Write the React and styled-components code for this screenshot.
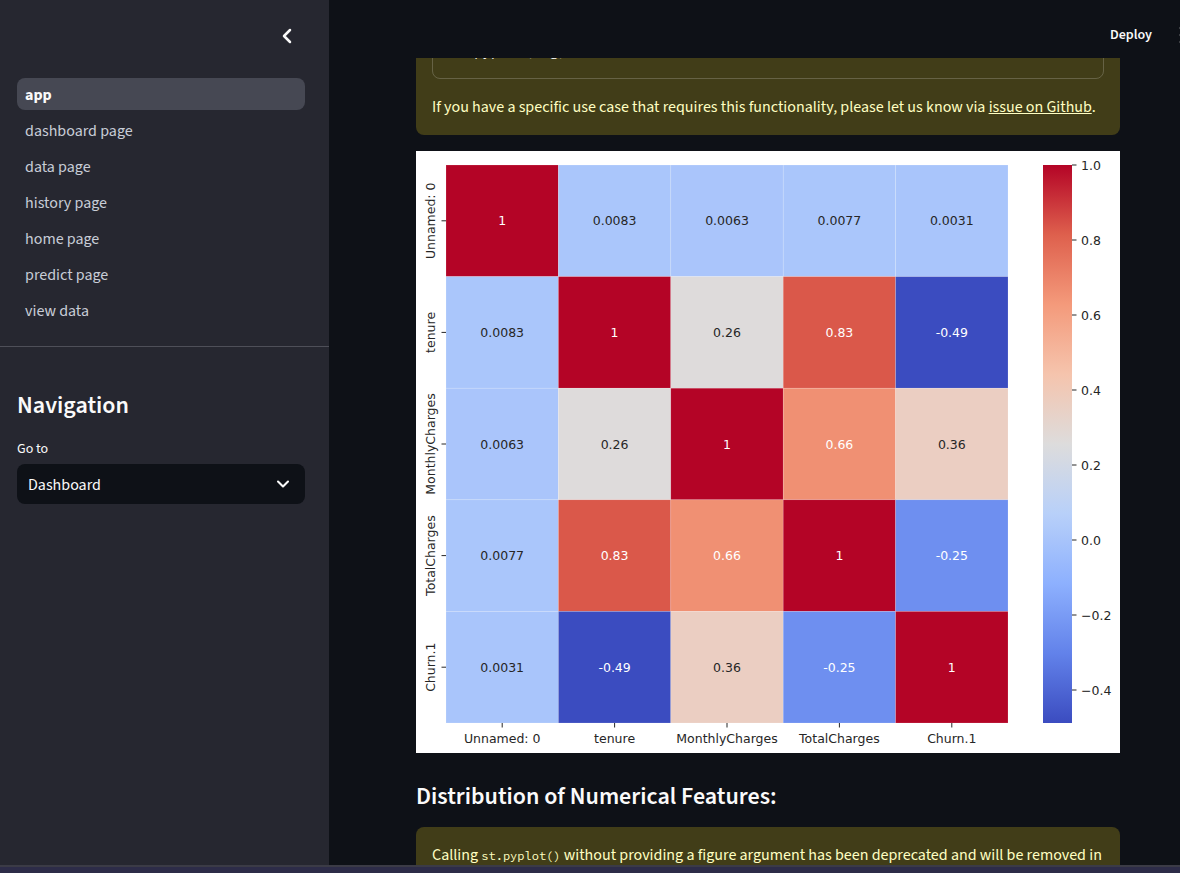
import React from 'react';
import styled, { createGlobalStyle } from 'styled-components';
import { ChevronLeft, ChevronDown, EllipsisVertical } from 'lucide-react';

const SANS = '"Source Sans Pro", "Source Sans 3", "Liberation Sans Narrow", Roboto, sans-serif';
const MONO = '"Source Code Pro", "Liberation Mono", "DejaVu Sans Mono", monospace';

const GlobalStyle = createGlobalStyle`
    html, body {
        margin: 0;
        padding: 0;
        overflow: hidden;
        background: #0e1117;
    }
    body {
        font-family: ${SANS};
        color: #fafafa;
    }
    * {
        box-sizing: border-box;
    }
`;

const Shell = styled.div`
    width: 1180px;
    height: 873px;
    display: flex;
    flex-direction: column;
    overflow: hidden;
`;

const Body = styled.div`
    flex: 1;
    min-height: 0;
    display: flex;
`;

const Taskbar = styled.div`
    height: 8px;
    flex-shrink: 0;
    border-top: 2px solid #3b3b46;
    background: #2d2c48;
`;

/* ---------- sidebar ---------- */

const Sidebar = styled.aside`
    width: 329px;
    flex-shrink: 0;
    background: #262730;
    display: flex;
    flex-direction: column;
`;

const SidebarHeader = styled.div`
    height: 72px;
    display: flex;
    justify-content: flex-end;
    align-items: flex-start;
    padding: 24px 30px 0 0;
`;

const IconButton = styled.button`
    width: 24px;
    height: 24px;
    padding: 0;
    border: none;
    background: transparent;
    color: #fafafa;
    display: flex;
    align-items: center;
    justify-content: center;
    cursor: pointer;
`;

const NavList = styled.nav`
    display: flex;
    flex-direction: column;
    gap: 4px;
    padding: 6px 24px 20px 17px;
    border-bottom: 1px solid #4e4f58;
`;

const NavItem = styled.a`
    height: 32px;
    display: flex;
    align-items: center;
    padding: 2px 8px 0;
    border-radius: 8px;
    font-size: 16px;
    text-decoration: none;
    color: ${p => (p.$active ? '#fafafa' : '#c8cdd7')};
    font-weight: ${p => (p.$active ? 700 : 400)};
    background: ${p => (p.$active ? '#464853' : 'transparent')};
`;

const SidebarContent = styled.div`
    padding: 44px 24px 0 17px;
    display: flex;
    flex-direction: column;
`;

const SidebarTitle = styled.h2`
    margin: 0;
    font-size: 24px;
    line-height: 29px;
    font-weight: 600;
    color: #fafafa;
`;

const FieldLabel = styled.label`
    margin-top: 21px;
    font-size: 14px;
    line-height: 16px;
    color: #fafafa;
`;

const Select = styled.div`
    margin-top: 7px;
    height: 40px;
    border-radius: 8px;
    background: #0e1117;
    display: flex;
    align-items: center;
    justify-content: space-between;
    padding: 2px 12px 0 11px;
    font-size: 16px;
    color: #fafafa;

    svg {
        margin-top: -2px;
    }
`;

/* ---------- main ---------- */

const Main = styled.main`
    flex: 1;
    min-width: 0;
    display: flex;
    flex-direction: column;
    background: #0e1117;
`;

const Header = styled.header`
    height: 58px;
    flex-shrink: 0;
    display: flex;
    justify-content: flex-end;
    align-items: flex-start;
    padding-top: 23px;
`;

const DeployButton = styled.button`
    height: 24px;
    border: none;
    background: transparent;
    padding: 0;
    margin-right: 18px;
    font-family: ${SANS};
    font-size: 14px;
    font-weight: 600;
    color: #fafafa;
    cursor: pointer;
`;

const MenuButton = styled(IconButton)`
    margin-right: -14px;
`;

const ScrollArea = styled.div`
    flex: 1;
    min-height: 0;
    overflow: hidden;
`;

const Column = styled.div`
    width: 704px;
    margin-left: 87px;
    display: flex;
    flex-direction: column;
`;

const ScrolledOff = styled.div`
    height: ${p => p.$height}px;
    flex-shrink: 0;
    display: flex;
    flex-direction: column;
    justify-content: flex-end;
    overflow: hidden;
`;

const Alert = styled.div`
    flex-shrink: 0;
    margin-top: ${p => p.$gap || 0}px;
    background: #413d18;
    border-radius: 8px;
    padding: 16px;
    color: #ffffc2;
    font-size: 16px;
    line-height: 24px;
`;

const AlertText = styled.p`
    margin: 0 0 16px;
    &:last-child {
        margin-bottom: 0;
    }
    a {
        color: inherit;
        text-decoration: underline;
    }
`;

const InlineCode = styled.code`
    font-family: ${MONO};
    font-size: 12px;
`;

const CodeBlock = styled.pre`
    margin: 0 0 16px;
    padding: 16px;
    border: 1px solid rgba(250, 250, 250, 0.2);
    border-radius: 8px;
    font-family: ${MONO};
    font-size: 14px;
    line-height: 21px;
    color: #fafafa;
    white-space: pre;
`;

const ChartFrame = styled.div`
    margin-top: 16px;
    width: 704px;
    height: 602px;
    background: #ffffff;
    flex-shrink: 0;

    svg {
        display: block;
    }
`;

const SectionTitle = styled.h3`
    margin: 29px 0 0;
    font-size: 24px;
    line-height: 29px;
    font-weight: 600;
    color: #fafafa;
`;

/* ---------- heatmap ---------- */

const LABELS = ['Unnamed: 0', 'tenure', 'MonthlyCharges', 'TotalCharges', 'Churn.1'];
const CORR = [
    [1, 0.0083, 0.0063, 0.0077, 0.0031],
    [0.0083, 1, 0.26, 0.83, -0.49],
    [0.0063, 0.26, 1, 0.66, 0.36],
    [0.0077, 0.83, 0.66, 1, -0.25],
    [0.0031, -0.49, 0.36, -0.25, 1],
];
const VMIN = -0.49;
const VMAX = 1;

const STOPS = [
    [59, 76, 192],
    [98, 130, 234],
    [141, 176, 254],
    [184, 208, 249],
    [221, 220, 220],
    [245, 196, 173],
    [244, 154, 123],
    [222, 96, 77],
    [180, 4, 38],
];

const coolwarm = t => {
    const x = Math.max(0, Math.min(1, t)) * 8;
    const i = Math.min(7, Math.floor(x));
    const f = x - i;
    return STOPS[i].map((a, k) => Math.round(a + (STOPS[i + 1][k] - a) * f));
};

const luminance = ([r, g, b]) => {
    const lin = c => {
        const v = c / 255;
        return v <= 0.03928 ? v / 12.92 : Math.pow((v + 0.055) / 1.055, 2.4);
    };
    return 0.2126 * lin(r) + 0.7152 * lin(g) + 0.0722 * lin(b);
};

const GX = 30;
const GY = 14;
const CW = 112.4;
const CH = 111.6;
const BAR_X = 627;
const BAR_W = 29;
const TICK_STEP = 375; // px per 1.0

const Heatmap = () => {
    const ticks = [1, 0.8, 0.6, 0.4, 0.2, 0, -0.2, -0.4];
    return (
        <svg width="704" height="602" viewBox="0 0 704 602" fontFamily='"DejaVu Sans", sans-serif'>
            <defs>
                <linearGradient id="cw" x1="0" y1="1" x2="0" y2="0">
                    {STOPS.map((c, i) => (
                        <stop key={i} offset={i / 8} stopColor={`rgb(${c.join(',')})`} />
                    ))}
                </linearGradient>
            </defs>

            {CORR.map((row, r) =>
                row.map((v, c) => {
                    const col = coolwarm((v - VMIN) / (VMAX - VMIN));
                    const x = GX + c * CW;
                    const y = GY + r * CH;
                    return (
                        <g key={`${r}-${c}`}>
                            <rect
                                x={x}
                                y={y}
                                width={CW}
                                height={CH}
                                fill={`rgb(${col.join(',')})`}
                                stroke="rgba(255,255,255,0.25)"
                                strokeWidth="0.6"
                            />
                            <text
                                x={x + CW / 2}
                                y={y + CH / 2}
                                textAnchor="middle"
                                dominantBaseline="central"
                                fontSize="12.5"
                                fill={luminance(col) < 0.408 ? '#ffffff' : '#262626'}
                            >
                                {String(v)}
                            </text>
                        </g>
                    );
                })
            )}

            {LABELS.map((l, i) => {
                const cy = GY + CH / 2 + i * CH;
                const cx = GX + CW / 2 + i * CW;
                return (
                    <g key={l} fill="#262626" fontSize="12.5">
                        <line x1={GX - 4.5} x2={GX} y1={cy} y2={cy} stroke="#262626" strokeWidth="1" />
                        <text transform={`translate(19 ${cy}) rotate(-90)`} textAnchor="middle">
                            {l}
                        </text>
                        <line x1={cx} x2={cx} y1={GY + 5 * CH} y2={GY + 5 * CH + 4.5} stroke="#262626" strokeWidth="1" />
                        <text x={cx} y={592} textAnchor="middle">
                            {l}
                        </text>
                    </g>
                );
            })}

            <rect x={BAR_X} y={GY} width={BAR_W} height={5 * CH} fill="url(#cw)" />
            {ticks.map(t => {
                const y = GY + (1 - t) * TICK_STEP;
                const label = t < 0 ? `\u2212${Math.abs(t).toFixed(1)}` : t.toFixed(1);
                return (
                    <g key={t}>
                        <line x1={BAR_X + BAR_W} x2={BAR_X + BAR_W + 4.5} y1={y} y2={y} stroke="#262626" strokeWidth="1" />
                        <text x={BAR_X + BAR_W + 9} y={y} dominantBaseline="central" fontSize="12.5" fill="#262626">
                            {label}
                        </text>
                    </g>
                );
            })}
        </svg>
    );
};

const PAGES = ['app', 'dashboard page', 'data page', 'history page', 'home page', 'predict page', 'view data'];

const App = () => {
    return (
        <Shell>
            <GlobalStyle />
            <Body>
                <Sidebar>
                    <SidebarHeader>
                        <IconButton aria-label="Collapse sidebar">
                            <ChevronLeft size={24} strokeWidth={2.5} />
                        </IconButton>
                    </SidebarHeader>
                    <NavList>
                        {PAGES.map(p => (
                            <NavItem key={p} href="#" $active={p === 'app'}>
                                {p}
                            </NavItem>
                        ))}
                    </NavList>
                    <SidebarContent>
                        <SidebarTitle>Navigation</SidebarTitle>
                        <FieldLabel>Go to</FieldLabel>
                        <Select>
                            <span>Dashboard</span>
                            <ChevronDown size={20} strokeWidth={2.5} />
                        </Select>
                    </SidebarContent>
                </Sidebar>

                <Main>
                    <Header>
                        <DeployButton>Deploy</DeployButton>
                        <MenuButton aria-label="Main menu">
                            <EllipsisVertical size={24} strokeWidth={2.5} />
                        </MenuButton>
                    </Header>
                    <ScrollArea>
                        <Column>
                            <ScrolledOff $height={77}>
                                <Alert>
                                    <AlertText>
                                        Calling <InlineCode>st.pyplot()</InlineCode> without providing a figure
                                        argument has been deprecated and will be removed in a later version as it
                                        requires the use of Matplotlib's global figure object, which is not
                                        thread-safe.
                                    </AlertText>
                                    <AlertText>
                                        To future-proof this code, you should pass in a figure as shown below:
                                    </AlertText>
                                    <CodeBlock>{`fig, ax = plt.subplots()
ax.scatter([1, 2, 3], [1, 2, 3])
#    other plotting actions...
st.pyplot(fig)`}</CodeBlock>
                                    <AlertText>
                                        If you have a specific use case that requires this functionality, please let
                                        us know via <a href="#">issue on Github</a>.
                                    </AlertText>
                                </Alert>
                            </ScrolledOff>

                            <ChartFrame>
                                <Heatmap />
                            </ChartFrame>

                            <SectionTitle>Distribution of Numerical Features:</SectionTitle>

                            <Alert $gap={16}>
                                <AlertText>
                                    Calling <InlineCode>st.pyplot()</InlineCode> without providing a figure argument
                                    has been deprecated and will be removed in a later version as it requires the use
                                    of Matplotlib's global figure object, which is not thread-safe.
                                </AlertText>
                            </Alert>
                        </Column>
                    </ScrollArea>
                </Main>
            </Body>
            <Taskbar />
        </Shell>
    );
};

export default App;
